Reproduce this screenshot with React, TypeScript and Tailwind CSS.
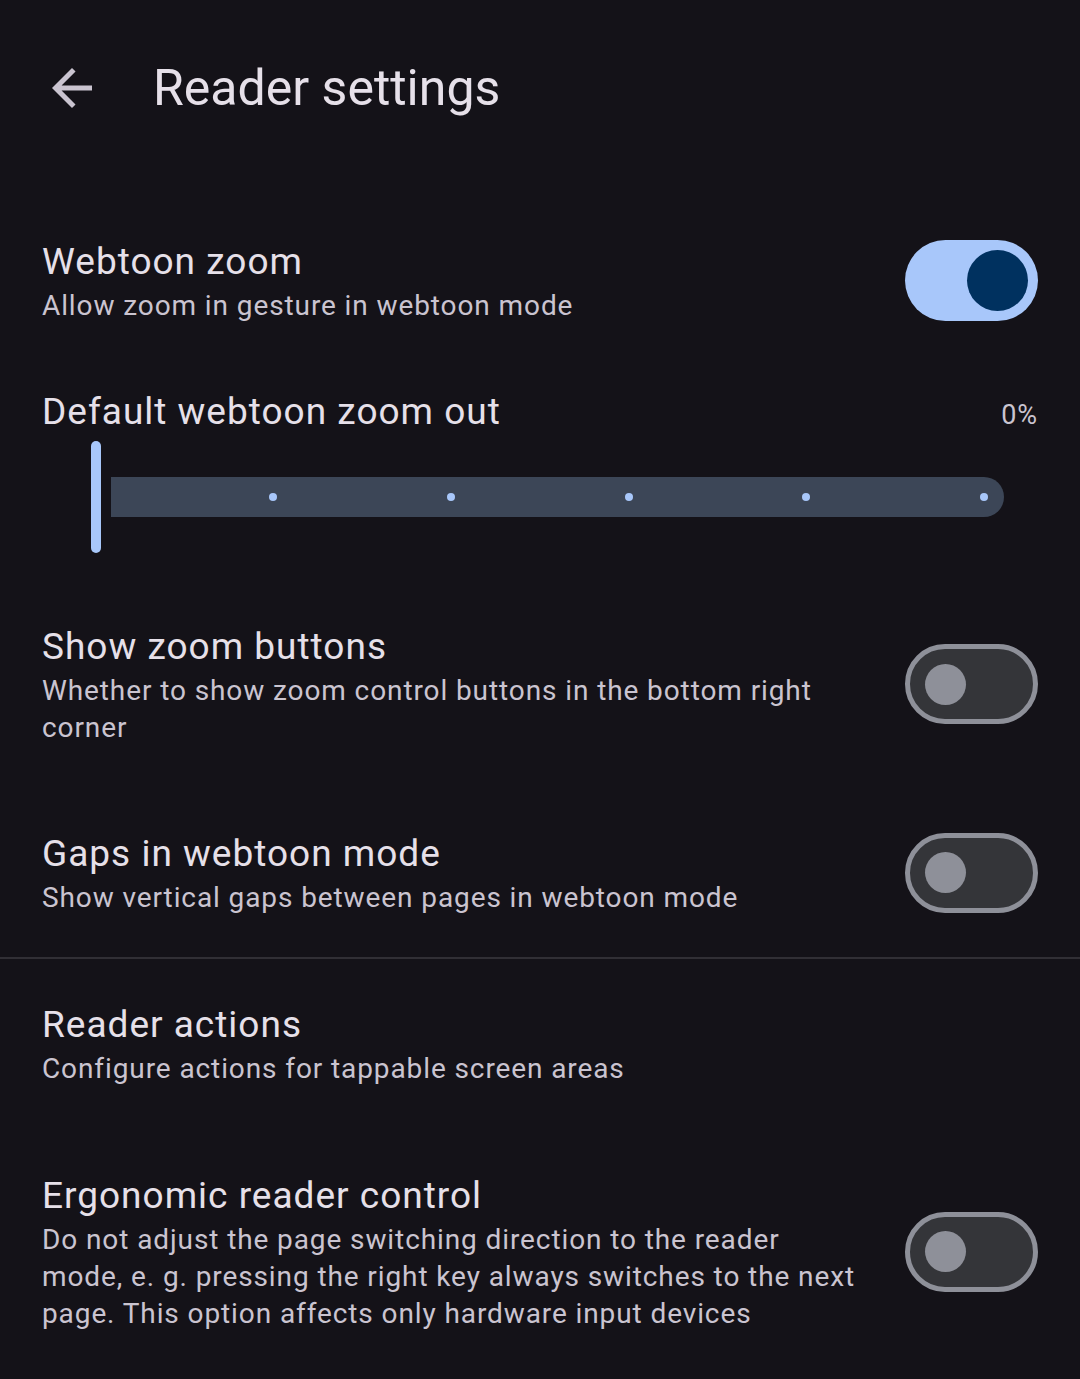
import React from "react";

const FONT = { fontFamily: "Roboto, 'Noto Sans', sans-serif" };

function Toggle({ on }: { on: boolean }) {
  if (on) {
    return (
      <div className="w-[133px] h-[81px] rounded-full bg-[#A8C7FA] flex items-center justify-end pr-[10px] shrink-0">
        <div className="w-[61px] h-[61px] rounded-full bg-[#00315F]" />
      </div>
    );
  }
  return (
    <div className="w-[133px] h-[80px] rounded-full bg-[#343539] border-[5px] border-[#8E9099] flex items-center pl-[15px] shrink-0">
      <div className="w-[41px] h-[41px] rounded-full bg-[#8E9099]" />
    </div>
  );
}

function Item({ title, sub, toggle, pad = "py-[41px]" }: { title: string; sub: string; toggle?: boolean; pad?: string }) {
  return (
    <div className={`flex items-center pl-[42px] pr-[42px] ${pad}`}>
      <div className="flex-1 min-w-0 pr-[46px]">
        <div className="text-[37px] leading-[50px] text-[#E6E0E9] tracking-[1px]">{title}</div>
        <div className="text-[28px] leading-[37px] text-[#CAC4D0] tracking-[0.9px]">{sub}</div>
      </div>
      {toggle !== undefined && <Toggle on={toggle} />}
    </div>
  );
}

export default function App() {
  const dots = [0, 1, 2, 3, 4];
  return (
    <div className="w-[1080px] h-[1379px] bg-[#141218] overflow-hidden" style={FONT}>
      <header className="h-[176px] flex items-center pl-[42px]">
        <svg width="60" height="60" viewBox="0 0 24 24" fill="#CAC4D0">
          <path d="M20 11H7.83l5.59-5.59L12 4l-8 8 8 8 1.41-1.41L7.83 13H20v-2z" />
        </svg>
        <h1 className="ml-[51px] text-[50px] leading-[60px] text-[#E6E0E9]">Reader settings</h1>
      </header>
      <div className="pt-[20px]">
        <Item title="Webtoon zoom" sub="Allow zoom in gesture in webtoon mode" toggle={true} />

        <div className="pt-[22px] pb-[28px] px-[42px]">
          <div className="flex items-center justify-between">
            <div className="text-[37px] leading-[50px] text-[#E6E0E9] tracking-[1px]">Default webtoon zoom out</div>
            <div className="text-[27px] text-[#CAC4D0] tracking-[0.9px] pt-[6px]">0%</div>
          </div>
          <div className="flex items-center h-[112px] mt-[4px] pl-[49px] pr-[34px]">
            <div className="w-[10px] h-[112px] rounded-full bg-[#A8C7FA] shrink-0" />
            <div className="ml-[10px] flex-1 h-[40px] bg-[#3C4657] rounded-l-[4px] rounded-r-full flex items-center justify-end pr-[16px]">
              <div className="flex w-[719px] justify-between">
                {dots.map((d) => (
                  <div key={d} className="w-[8px] h-[8px] rounded-full bg-[#A8C7FA]" />
                ))}
              </div>
            </div>
          </div>
        </div>

        <Item title="Show zoom buttons" sub="Whether to show zoom control buttons in the bottom right corner" toggle={false} />
        <Item title="Gaps in webtoon mode" sub="Show vertical gaps between pages in webtoon mode" toggle={false} pad="pt-[42px] pb-[41px]" />
        <div className="h-[2px] bg-[#312F35]" />
        <Item title="Reader actions" sub="Configure actions for tappable screen areas" pad="pt-[41px] pb-[43px]" />
        <Item
          title="Ergonomic reader control"
          sub="Do not adjust the page switching direction to the reader mode, e. g. pressing the right key always switches to the next page. This option affects only hardware input devices"
          toggle={false}
        />
      </div>
    </div>
  );
}
